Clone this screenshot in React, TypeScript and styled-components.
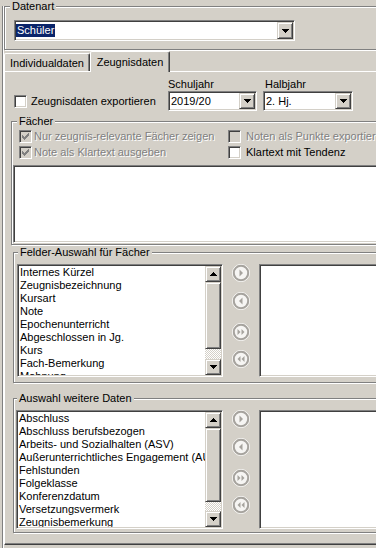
import React from "react";
import styled, { createGlobalStyle } from "styled-components";

// Classic Windows 3D borders
const raised = `
  border: 1px solid;
  border-color: #d4d0c8 #404040 #404040 #d4d0c8;
  box-shadow: inset 1px 1px 0 #fff, inset -1px -1px 0 #808080;
`;

const sunken = `
  border: 1px solid;
  border-color: #808080 #fff #fff #808080;
  box-shadow: inset 1px 1px 0 #404040, inset -1px -1px 0 #d4d0c8;
`;

const GlobalStyle = createGlobalStyle`
  html, body {
    margin: 0;
    padding: 0;
    background: #d4d0c8;
  }
  body {
    font-family: "Liberation Sans", Arial, sans-serif;
    font-size: 11px;
    color: #000;
  }
  * {
    box-sizing: border-box;
  }
`;

const Root = styled.div`
  width: 376px;
  height: 548px;
  overflow: hidden;
  padding-left: 2px;
  background: #d4d0c8;
`;

const Frame = styled.div`
  width: 420px;
  height: 100%;
  border-left: 1px solid #808080;
  box-shadow: inset 1px 0 0 #fff;
  padding-left: 1px;
`;

// Group boxes
const GroupBox = styled.div`
  position: relative;
  border: 1px solid #808080;
  box-shadow: inset 1px 1px 0 #fff, 1px 1px 0 #fff;
`;

const Caption = styled.span<{ $x: number }>`
  position: absolute;
  top: -7px;
  left: ${(p) => p.$x}px;
  padding: 0 2px;
  line-height: 13px;
  background: #d4d0c8;
  white-space: nowrap;
`;

const DatenartBox = styled(GroupBox)`
  margin-top: 6px;
  padding: 13px 0 8px 9px;
`;

const FaecherBox = styled(GroupBox)`
  margin: 10px 0 0 6px;
  padding: 6px 0 1px 1px;
`;

const FieldsBox = styled(GroupBox)<{ $mt: number; $pl: number; $pb: number }>`
  margin: ${(p) => p.$mt}px 0 0 8px;
  padding: 11px 0 ${(p) => p.$pb}px ${(p) => p.$pl}px;
`;

// Combo boxes
const Combo = styled.div<{ $w: number; $h: number }>`
  ${sunken}
  width: ${(p) => p.$w}px;
  height: ${(p) => p.$h}px;
  padding: 1px;
  background: #fff;
  display: flex;
`;

const ComboText = styled.div`
  flex: 1;
  display: flex;
  align-items: center;
  overflow: hidden;
`;

const Value = styled.span<{ $selected?: boolean }>`
  padding: 0 1px;
  line-height: 13px;
  color: ${(p) => (p.$selected ? "#fff" : "#000")};
  background: ${(p) => (p.$selected ? "#0a246a" : "transparent")};
`;

const SmallButton = styled.div<{ $h?: number }>`
  ${raised}
  width: 16px;
  height: ${(p) => (p.$h ? `${p.$h}px` : "100%")};
  flex: none;
  background: #d4d0c8;
  display: flex;
  align-items: center;
  justify-content: center;
`;

function Arrow({ up }: { up?: boolean }) {
  return (
    <svg width="7" height="4" viewBox="0 0 7 4" shapeRendering="crispEdges">
      <polygon points={up ? "0,4 7,4 3.5,0" : "0,0 7,0 3.5,4"} fill="#000" />
    </svg>
  );
}

function Dropdown({ w, h, value, selected }: { w: number; h: number; value: string; selected?: boolean }) {
  return (
    <Combo $w={w} $h={h}>
      <ComboText>
        <Value $selected={selected}>{value}</Value>
      </ComboText>
      <SmallButton>
        <Arrow />
      </SmallButton>
    </Combo>
  );
}

// Tabs
const TabStrip = styled.div`
  display: flex;
  align-items: flex-end;
  height: 21px;
`;

const Tab = styled.div<{ $active?: boolean; $w: number }>`
  position: relative;
  z-index: ${(p) => (p.$active ? 1 : 0)};
  width: ${(p) => p.$w}px;
  height: ${(p) => (p.$active ? 21 : 18)}px;
  margin-bottom: ${(p) => (p.$active ? -1 : 0)}px;
  padding-bottom: ${(p) => (p.$active ? 1 : 0)}px;
  border-top: 1px solid #fff;
  border-left: 1px solid #fff;
  border-right: 1px solid #404040;
  border-radius: 2px 2px 0 0;
  box-shadow: inset -1px 0 0 #808080;
  background: #d4d0c8;
  display: flex;
  align-items: center;
  justify-content: center;
  white-space: nowrap;
`;

const TabPage = styled.div`
  border-top: 1px solid #fff;
  border-left: 1px solid #fff;
  border-bottom: 1px solid #404040;
  box-shadow: inset 0 -1px 0 #808080;
  padding: 6px 0 11px 0;
`;

// Top row
const TopRow = styled.div`
  display: grid;
  grid-template-columns: 154px 95px 90px;
  align-items: end;
  padding-left: 9px;
`;

const FieldLabel = styled.div<{ $indent?: number }>`
  line-height: 13px;
  padding-left: ${(p) => p.$indent || 0}px;
`;

// Checkboxes
const CheckLabel = styled.label<{ $gap: number; $h: number; $disabled?: boolean }>`
  display: flex;
  align-items: center;
  gap: ${(p) => p.$gap}px;
  height: ${(p) => p.$h}px;
  white-space: nowrap;
  color: ${(p) => (p.$disabled ? "#808080" : "#000")};
  text-shadow: ${(p) => (p.$disabled ? "1px 1px 0 #fff" : "none")};
`;

const Box = styled.span<{ $disabled?: boolean }>`
  ${sunken}
  width: 13px;
  height: 13px;
  flex: none;
  display: flex;
  align-items: center;
  justify-content: center;
  background: ${(p) => (p.$disabled ? "#d4d0c8" : "#fff")};
`;

function CheckBox({
  text,
  checked,
  disabled,
  gap,
  h = 16,
}: {
  text: string;
  checked?: boolean;
  disabled?: boolean;
  gap: number;
  h?: number;
}) {
  return (
    <CheckLabel $gap={gap} $h={h} $disabled={disabled}>
      <Box $disabled={disabled}>
        {checked && (
          <svg width="7" height="7" viewBox="0 0 7 7" shapeRendering="crispEdges">
            <path
              d="M0 2h1v1h1v1h1v-1h1v-1h1v-1h1v-1h1v3h-1v1h-1v1h-1v1h-1v1h-1v-1h-1v-1h-1z"
              fill={disabled ? "#808080" : "#000"}
            />
          </svg>
        )}
      </Box>
      <span>{text}</span>
    </CheckLabel>
  );
}

const CheckGrid = styled.div`
  display: grid;
  grid-template-columns: 209px auto;
  margin-left: 6px;
`;

// List boxes
const ListBox = styled.div<{ $w?: number; $h: number; $mt?: number }>`
  ${sunken}
  width: ${(p) => (p.$w ? `${p.$w}px` : "auto")};
  flex: ${(p) => (p.$w ? "none" : "1")};
  height: ${(p) => p.$h}px;
  margin-top: ${(p) => p.$mt || 0}px;
  padding: 1px;
  background: #fff;
  display: flex;
  overflow: hidden;
`;

const Items = styled.ul`
  flex: 1;
  margin: 0;
  padding: 0 0 0 1px;
  list-style: none;
  overflow: hidden;

  li {
    line-height: 13px;
    white-space: nowrap;
  }
`;

const ScrollBar = styled.div`
  width: 16px;
  flex: none;
  display: flex;
  flex-direction: column;
`;

const Thumb = styled.div<{ $h: number }>`
  ${raised}
  height: ${(p) => p.$h}px;
  flex: none;
  background: #d4d0c8;
`;

const Track = styled.div`
  flex: 1;
  background: repeating-conic-gradient(#fff 0 25%, #d4d0c8 0 50%) 0 0 / 2px 2px;
`;

const PickerRow = styled.div`
  display: flex;
  align-items: flex-start;
`;

const MoveButtons = styled.div`
  width: 36px;
  flex: none;
  display: flex;
  flex-direction: column;
  align-items: center;
`;

const MoveButton = styled.div<{ $mt: number }>`
  width: 18px;
  height: 18px;
  margin-top: ${(p) => p.$mt}px;
`;

type Move = "right" | "left" | "rightAll" | "leftAll";

const movePaths: Record<Move, string[]> = {
  right: ["7.5,5.5 11,9 7.5,12.5"],
  left: ["10.5,5.5 7,9 10.5,12.5"],
  rightAll: ["5.5,6 8.5,9 5.5,12", "9.5,6 12.5,9 9.5,12"],
  leftAll: ["8.5,6 5.5,9 8.5,12", "12.5,6 9.5,9 12.5,12"],
};

function MoveIcon({ kind, mt }: { kind: Move; mt: number }) {
  return (
    <MoveButton $mt={mt}>
      <svg width="18" height="18" viewBox="0 0 18 18">
        <circle cx="9" cy="9" r="8.6" fill="none" stroke="#fff" strokeWidth="0.8" />
        <circle cx="9" cy="9" r="7.2" fill="#f6f5f3" stroke="#a6a39e" strokeWidth="2" />
        {movePaths[kind].map((pts) => (
          <polygon key={pts} points={pts} fill="#a6a39e" />
        ))}
      </svg>
    </MoveButton>
  );
}

function Picker({ items, listW, h, thumb }: { items: string[]; listW: number; h: number; thumb: number }) {
  return (
    <PickerRow>
      <ListBox $w={listW} $h={h}>
        <Items>
          {items.map((it) => (
            <li key={it}>{it}</li>
          ))}
        </Items>
        <ScrollBar>
          <SmallButton $h={16}>
            <Arrow up />
          </SmallButton>
          <Thumb $h={thumb} />
          <Track />
          <SmallButton $h={16}>
            <Arrow />
          </SmallButton>
        </ScrollBar>
      </ListBox>
      <MoveButtons>
        <MoveIcon kind="right" mt={0} />
        <MoveIcon kind="left" mt={10} />
        <MoveIcon kind="rightAll" mt={13} />
        <MoveIcon kind="leftAll" mt={9} />
      </MoveButtons>
      <ListBox $h={h} />
    </PickerRow>
  );
}

const faecherFields = [
  "Internes Kürzel",
  "Zeugnisbezeichnung",
  "Kursart",
  "Note",
  "Epochenunterricht",
  "Abgeschlossen in Jg.",
  "Kurs",
  "Fach-Bemerkung",
  "Mahnung",
];

const weitereDaten = [
  "Abschluss",
  "Abschluss berufsbezogen",
  "Arbeits- und Sozialhalten (ASV)",
  "Außerunterrichtliches Engagement (AUE)",
  "Fehlstunden",
  "Folgeklasse",
  "Konferenzdatum",
  "Versetzungsvermerk",
  "Zeugnisbemerkung",
];

export default function App() {
  return (
    <Root>
      <GlobalStyle />
      <Frame>
        <DatenartBox>
          <Caption $x={5}>Datenart</Caption>
          <Dropdown w={281} h={21} value="Schüler" selected />
        </DatenartBox>

        <TabStrip>
          <Tab $w={86}>Individualdaten</Tab>
          <Tab $w={80} $active>
            Zeugnisdaten
          </Tab>
        </TabStrip>

        <TabPage>
          <TopRow>
            <CheckBox text="Zeugnisdaten exportieren" gap={4} h={20} />
            <div>
              <FieldLabel>Schuljahr</FieldLabel>
              <Dropdown w={89} h={20} value="2019/20" />
            </div>
            <div>
              <FieldLabel $indent={2}>Halbjahr</FieldLabel>
              <Dropdown w={90} h={20} value="2. Hj." />
            </div>
          </TopRow>

          <FaecherBox>
            <Caption $x={5}>Fächer</Caption>
            <CheckGrid>
              <CheckBox text="Nur zeugnis-relevante Fächer zeigen" checked disabled gap={2} />
              <CheckBox text="Noten als Punkte exportieren" disabled gap={5} />
              <CheckBox text="Note als Klartext ausgeben" checked disabled gap={2} />
              <CheckBox text="Klartext mit Tendenz" gap={5} />
            </CheckGrid>
            <ListBox $h={78} $mt={5} />
          </FaecherBox>

          <FieldsBox $mt={7} $pl={3} $pb={5}>
            <Caption $x={4}>Felder-Auswahl für Fächer</Caption>
            <Picker items={faecherFields} listW={206} h={113} thumb={67} />
          </FieldsBox>

          <FieldsBox $mt={15} $pl={2} $pb={3}>
            <Caption $x={3}>Auswahl weitere Daten</Caption>
            <Picker items={weitereDaten} listW={207} h={119} thumb={74} />
          </FieldsBox>
        </TabPage>
      </Frame>
    </Root>
  );
}
